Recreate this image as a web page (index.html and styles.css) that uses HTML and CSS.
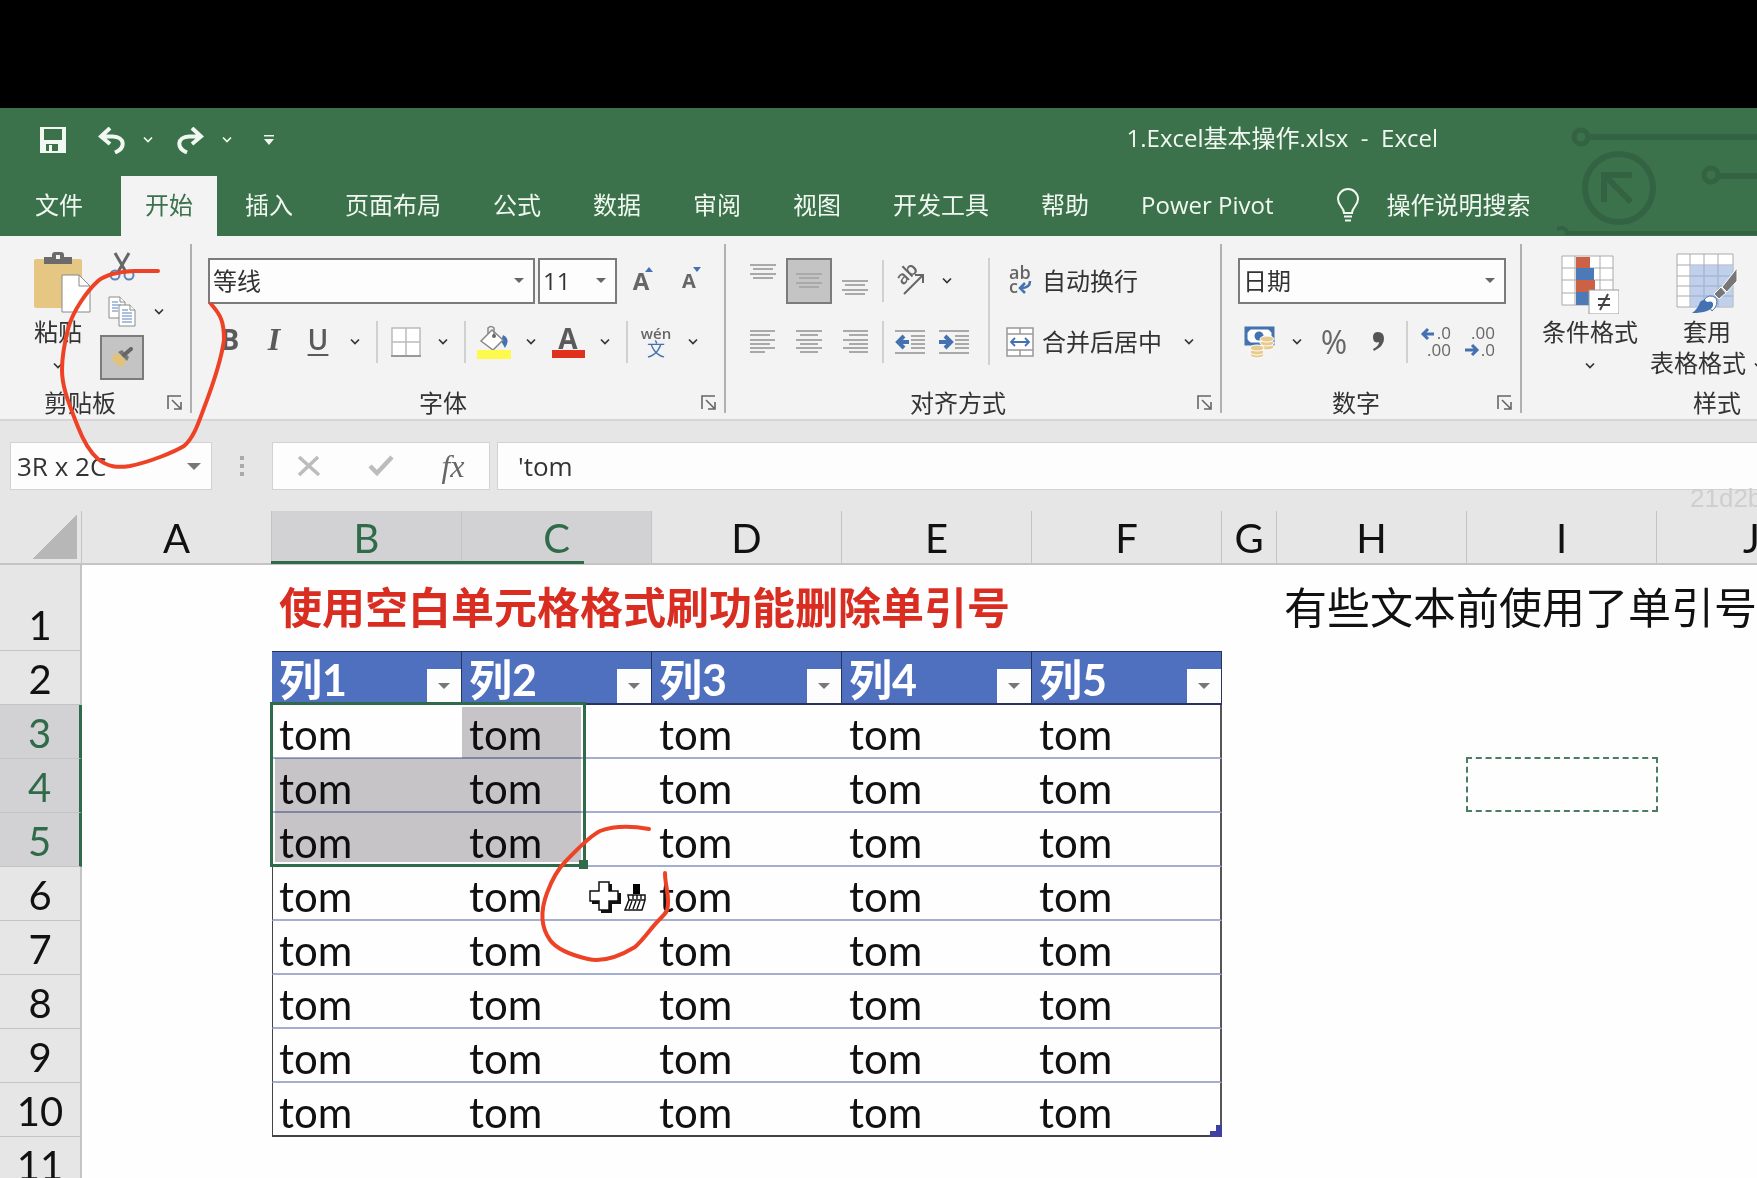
FILE: index.html
```html
<!DOCTYPE html>
<html lang="zh-CN">
  <head>
    <meta charset="UTF-8" />
    <meta name="viewport" content="width=device-width, initial-scale=1.0" />
    <title>1.Excel基本操作.xlsx - Excel</title>
    <link rel="stylesheet" href="styles.css">
  </head>
  <body>
    <!-- 公用图标 -->
    <svg class="defs" aria-hidden="true">
      <symbol id="chev" viewBox="0 0 10 8"><path d="M1 1.5 5 5.5 9 1.5" fill="none" stroke="currentColor" stroke-width="1.7" /></symbol>
      <symbol id="launch" viewBox="0 0 16 16"><path d="M1 14V1H14M5 5 14 14M14 7V14H7" fill="none" stroke="#666" stroke-width="1.6" /></symbol>
    </svg>

    <div class="blank"></div>

    <header class="top">
      <svg class="circuit" width="200" height="128" viewBox="0 0 200 128" fill="none" stroke="#336343" stroke-width="5">
        <circle cx="24" cy="29" r="7" /><path d="M31 29H200" stroke-width="6" />
        <circle cx="62" cy="80" r="34" stroke-width="6" />
        <path d="M47 94V67H75M49 69 74 94" stroke-width="6" />
        <circle cx="154" cy="67" r="7" /><path d="M161 68H200" stroke-width="6" />
        <path d="M-4 128C-4 118 10 118 10 125H200" stroke-width="4" />
      </svg>

      <div class="titlebar">
        <div class="quick">
          <button class="btn save" aria-label="保存">
            <svg width="26" height="26" viewBox="0 0 26 26"><path d="M0 0H26V26H0ZM4 2V13H22V2ZM6 17V24H9V18H12V24H18V17Z" fill="currentColor" fill-rule="evenodd" /></svg>
          </button>
          <div class="pair">
            <button class="btn" aria-label="撤消">
              <svg width="27" height="27" viewBox="0 0 27 27"><path d="M12 1 3 9.500 12 17M4 9.500H15C27 10 28 21 17 25.500" fill="none" stroke="currentColor" stroke-width="4" /></svg>
            </button>
            <button class="chev" aria-label="撤消列表"><svg width="10" height="8"><use href="#chev" /></svg></button>
          </div>
          <div class="pair">
            <button class="btn" aria-label="恢复">
              <svg width="27" height="27" viewBox="0 0 27 27"><path d="M15 1 24 9.500 15 17M23 9.500H12C0 10 -1 21 10 25.500" fill="none" stroke="currentColor" stroke-width="4" /></svg>
            </button>
            <button class="chev" aria-label="恢复列表"><svg width="10" height="8"><use href="#chev" /></svg></button>
          </div>
          <button class="btn" aria-label="自定义">
            <svg width="10" height="10" viewBox="0 0 10 10"><path d="M0 0H10V1.500H0ZM0 4H10L5 10Z" fill="currentColor" /></svg>
          </button>
        </div>
        <div class="title">1.Excel基本操作.xlsx&nbsp; -&nbsp; Excel</div>
      </div>

      <nav class="tabs">
        <a href="#">文件</a>
        <a href="#" class="active">开始</a>
        <a href="#">插入</a>
        <a href="#">页面布局</a>
        <a href="#">公式</a>
        <a href="#">数据</a>
        <a href="#">审阅</a>
        <a href="#">视图</a>
        <a href="#">开发工具</a>
        <a href="#">帮助</a>
        <a href="#">Power Pivot</a>
        <a href="#" class="tell">
          <svg width="24" height="34" viewBox="0 0 24 34" fill="none" stroke="currentColor" stroke-width="2"><path d="M8 25C8 19 2 18 2 11A10 10 0 0 1 22 11C22 18 16 19 16 25ZM8 28.500H16M9 32.500H15" /></svg>
          操作说明搜索
        </a>
      </nav>
    </header>

    <section class="ribbon">
      <div class="group clipboard">
        <div class="body">
          <button class="big paste">
            <svg width="58" height="62" viewBox="0 0 58 62">
              <rect y="7" width="48" height="49" rx="2" fill="#e6c683" />
              <path d="M10 12V5H18V3Q18 0 21 0H27Q30 0 30 3V5H38V12Z" fill="#6b6b6b" /><rect x="22" y="3" width="4" height="4" fill="#f3f3f3" />
              <path d="M28 23H45L56 34V60H28Z" fill="#fff" stroke="#888" /><path d="M45 23V34H56" fill="none" stroke="#888" />
            </svg>
            <span>粘贴</span>
            <span><svg width="10" height="8"><use href="#chev" /></svg></span>
          </button>
          <div class="small">
            <button class="btn" aria-label="剪切">
              <svg width="26" height="30" viewBox="0 0 26 30" fill="none"><path d="M6 1 17 20M20 1 9 20" stroke="#666" stroke-width="3" /><circle cx="6" cy="23" r="4.500" stroke="#5b84b8" stroke-width="2" /><circle cx="20" cy="23" r="4.500" stroke="#5b84b8" stroke-width="2" /></svg>
            </button>
            <div class="pair">
              <button class="btn" aria-label="复制">
                <svg width="28" height="32" viewBox="0 0 28 32"><g fill="#fff" stroke="#8a8a8a"><path d="M1 1H12L17 6V22H1Z" /><path d="M11 9H22L27 14V30H11Z" /><path d="M12 1V6H17M22 9V14H27" /></g><path d="M4 6H10M4 9H13M4 12H10M4 15H10M14 14H20M14 17H24M14 20H24M14 23H24M14 26H24" stroke="#8facd2" stroke-width="1.4" /></svg>
              </button>
              <button class="chev" aria-label="复制选项"><svg width="10" height="8"><use href="#chev" /></svg></button>
            </div>
            <button class="btn on" aria-label="格式刷">
              <svg width="24" height="22" viewBox="0 0 24 22"><path d="M1 10 8 6 17 14 11 20Q6 19 1 10Z" fill="#e2c27b" /><path d="M8 5 12 3 19 10 17 14Z" fill="#777" /><path d="M14 8 21 2" stroke="#666" stroke-width="4" stroke-linecap="round" /></svg>
            </button>
          </div>
        </div>
        <div class="foot"><span>剪贴板</span><button class="launch" aria-label="剪贴板设置"><svg width="16" height="16"><use href="#launch" /></svg></button></div>
      </div>

      <div class="group font">
        <div class="row">
          <label class="combo name"><select aria-label="字体"><option>等线</option></select></label>
          <label class="combo size"><select aria-label="字号"><option>11</option></select></label>
          <button class="btn grow" aria-label="增大字号"><b>A</b><svg width="8" height="5" viewBox="0 0 8 5"><path d="M0 5H8L4 0Z" fill="#4472b0" /></svg></button>
          <button class="btn grow less" aria-label="减小字号"><b>A</b><svg width="8" height="5" viewBox="0 0 8 5"><path d="M0 0H8L4 5Z" fill="#4472b0" /></svg></button>
        </div>
        <div class="row">
          <button class="btn letter"><b>B</b></button>
          <button class="btn letter serif"><i>I</i></button>
          <button class="btn letter"><u>U</u></button>
          <button class="chev" aria-label="下划线"><svg width="10" height="8"><use href="#chev" /></svg></button>
          <i class="sep"></i>
          <button class="btn" aria-label="边框">
            <svg width="30" height="30" viewBox="0 0 30 30"><path d="M1 1H29V29H1ZM15 1V29M1 15H29" fill="#fff" stroke="#bbb" stroke-width="1.5" /><path d="M0 29H30" stroke="#999" stroke-width="2" /></svg>
          </button>
          <button class="chev" aria-label="边框选项"><svg width="10" height="8"><use href="#chev" /></svg></button>
          <i class="sep"></i>
          <button class="btn" aria-label="填充颜色">
            <svg width="34" height="34" viewBox="0 0 34 34"><path d="M26 10Q34 14 28 23L24 16Z" fill="#4472b0" /><path d="M4 16 15 5 26 15 16 25Z" fill="#fff" stroke="#888" stroke-width="1.5" /><path d="M11 9V3Q14 0 17 3V11" fill="none" stroke="#888" stroke-width="1.500" /><circle cx="17" cy="11" r="2" fill="#666" /><rect y="25" width="34" height="9" rx="1" fill="#fdf94d" /></svg>
          </button>
          <button class="chev" aria-label="填充选项"><svg width="10" height="8"><use href="#chev" /></svg></button>
          <button class="btn color"><b>A</b></button>
          <button class="chev" aria-label="颜色选项"><svg width="10" height="8"><use href="#chev" /></svg></button>
          <i class="sep"></i>
          <button class="btn wen"><span>wén</span><span>文</span></button>
          <button class="chev" aria-label="拼音选项"><svg width="10" height="8"><use href="#chev" /></svg></button>
        </div>
        <div class="foot"><span>字体</span><button class="launch" aria-label="字体设置"><svg width="16" height="16"><use href="#launch" /></svg></button></div>
      </div>

      <div class="group align">
        <div class="body">
          <div class="rows">
            <div class="row">
              <button class="btn wide" aria-label="顶端对齐"><svg class="up" width="28" height="16" viewBox="0 0 28 16"><path d="M1 1H27M4 5H24M1 10H27M4 14H24" /></svg></button>
              <button class="btn wide on" aria-label="垂直居中"><svg width="28" height="16" viewBox="0 0 28 16"><path d="M1 1H27M4 5H24M1 10H27M4 14H24" /></svg></button>
              <button class="btn wide" aria-label="底端对齐"><svg class="down" width="28" height="16" viewBox="0 0 28 16"><path d="M1 1H27M4 5H24M1 10H27M4 14H24" /></svg></button>
              <i class="sep"></i>
              <button class="btn" aria-label="方向">
                <svg width="30" height="30" viewBox="0 0 30 30"><text x="0" y="0" transform="translate(8 20) rotate(-45)" font-size="19" font-weight="600" fill="#666">ab</text><path d="M9 28 28 9M20 9H28V17" fill="none" stroke="#666" stroke-width="2" /></svg>
              </button>
              <button class="chev" aria-label="方向选项"><svg width="10" height="8"><use href="#chev" /></svg></button>
            </div>
            <div class="row">
              <button class="btn wide" aria-label="左对齐"><svg width="26" height="24" viewBox="0 0 26 24"><path d="M0 1H25M0 5H20M0 10H25M0 14H20M0 18H25M0 22H15" /></svg></button>
              <button class="btn wide" aria-label="居中"><svg width="26" height="24" viewBox="0 0 26 24"><path d="M0 1H26M4 5H22M0 10H26M4 14H22M0 18H26M4 22H22" /></svg></button>
              <button class="btn wide" aria-label="右对齐"><svg width="26" height="24" viewBox="0 0 26 24"><path d="M1 1H26M7 5H26M1 10H26M7 14H26M1 18H26M7 22H26" /></svg></button>
              <i class="sep"></i>
              <button class="btn" aria-label="减少缩进"><svg width="30" height="24" viewBox="0 0 30 24"><path d="M0 1H30M16 6H30M16 10H30M16 14H30M16 18H30M0 23H30" /><path class="arrow" d="M14 12H4M9 6 3 12 9 18" /></svg></button>
              <button class="btn" aria-label="增加缩进"><svg width="30" height="24" viewBox="0 0 30 24"><path d="M0 1H30M16 6H30M16 10H30M16 14H30M16 18H30M0 23H30" /><path class="arrow" d="M0 12H10M6 6 12 12 6 18" /></svg></button>
            </div>
          </div>
          <i class="sep tall"></i>
          <div class="rows">
            <button class="row text">
              <span class="btn"><svg width="24" height="28" viewBox="0 0 24 28"><text x="1" y="12" font-size="18" font-weight="600" fill="#666">ab</text><text x="1" y="26" font-size="18" font-weight="600" fill="#666">c</text><path d="M22 14Q22 21 13 21M17 16 12 21 17 26" fill="none" stroke="#4472b0" stroke-width="2.500" /></svg></span>
              自动换行
            </button>
            <div class="row">
              <button class="row text">
                <span class="btn"><svg width="28" height="30" viewBox="0 0 28 30"><path d="M1 1H27V29H1ZM1 7H27M1 23H27M14 1V7M14 23V29" fill="#fff" stroke="#999" stroke-width="1.500" /><path d="M5 15H23M9 11 5 15 9 19M19 11 23 15 19 19" fill="none" stroke="#4472b0" stroke-width="1.800" /></svg></span>
                合并后居中
              </button>
              <button class="chev merge" aria-label="合并选项"><svg width="10" height="8"><use href="#chev" /></svg></button>
            </div>
          </div>
        </div>
        <div class="foot"><span>对齐方式</span><button class="launch" aria-label="对齐设置"><svg width="16" height="16"><use href="#launch" /></svg></button></div>
      </div>

      <div class="group number">
        <div class="row">
          <label class="combo format"><select aria-label="数字格式"><option>日期</option></select></label>
        </div>
        <div class="row">
          <button class="btn" aria-label="会计数字格式">
            <svg width="30" height="32" viewBox="0 0 30 32"><rect x="1" y="2" width="27" height="16" fill="#fff" stroke="#4472b0" stroke-width="3" /><path d="M1 2H7L1 8ZM28 2H22L28 8ZM1 18V12L7 18Z" fill="#4472b0" /><circle cx="14" cy="10" r="4.500" fill="#4472b0" /><g fill="#e8c98e" stroke="#fff"><ellipse cx="22" cy="21" rx="7" ry="3" /><ellipse cx="22" cy="17" rx="7" ry="3" /><ellipse cx="22" cy="13" rx="7" ry="3" /><ellipse cx="12" cy="29" rx="7" ry="3" /><ellipse cx="12" cy="26" rx="7" ry="3" /><ellipse cx="12" cy="22" rx="7" ry="3" /></g></svg>
          </button>
          <button class="chev" aria-label="货币选项"><svg width="10" height="8"><use href="#chev" /></svg></button>
          <button class="btn percent">%</button>
          <button class="btn" aria-label="千位分隔样式"><svg width="13" height="20" viewBox="0 0 13 20"><path d="M6 0Q12 0 12 7T2 19L1 17Q7 14 7 10Q1 12 1 5Q1 0 6 0Z" fill="#555" /></svg></button>
          <i class="sep"></i>
          <button class="btn" aria-label="增加小数位数"><svg width="30" height="32" viewBox="0 0 30 32" font-size="17" fill="#666"><text x="30" y="13" text-anchor="end">.0</text><text x="30" y="30" text-anchor="end">.00</text><path class="arrow thin" d="M13 8H3M7 3 2 8 7 13" /></svg></button>
          <button class="btn" aria-label="减少小数位数"><svg width="30" height="32" viewBox="0 0 30 32" font-size="17" fill="#666"><text x="30" y="13" text-anchor="end">.00</text><text x="30" y="30" text-anchor="end">.0</text><path class="arrow thin" d="M0 24H11M7 19 12 24 7 29" /></svg></button>
        </div>
        <div class="foot"><span>数字</span><button class="launch" aria-label="数字设置"><svg width="16" height="16"><use href="#launch" /></svg></button></div>
      </div>

      <div class="group styles">
        <div class="body">
          <button class="big">
            <svg width="58" height="62" viewBox="0 0 58 62">
              <path d="M1 4H52V53H1ZM1 16H52M1 28H52M1 41H52M14 4V53M39 4V53" fill="#fff" stroke="#aaa" />
              <path d="M15 5H29V16H15ZM15 28H34V40H15Z" fill="#cb6145" /><path d="M15 16H33V28H15ZM15 40H28V53H15Z" fill="#4c7ab8" />
              <rect x="28" y="38" width="30" height="24" fill="#fff" stroke="#999" /><path d="M37 47H49M37 53H49M47 42 39 58" stroke="#444" stroke-width="2" />
            </svg>
            <span>条件格式</span>
            <span><svg width="10" height="8"><use href="#chev" /></svg></span>
          </button>
          <button class="big second">
            <svg width="62" height="62" viewBox="0 0 62 62">
              <path d="M1 2H57V55H1ZM1 13H57M1 24H57M1 34H57M1 44H57M14 2V55M28 2V55M42 2V55" fill="#fff" stroke="#aaa" />
              <path d="M14 13H57V55H14Z" fill="#b5c7e6" opacity=".85" /><path d="M14 24H57M14 34H57M14 44H57M28 13V55M42 13V55" stroke="#9fb3d6" />
              <path d="M61 16V29L51 40 46 35Z" fill="#777" stroke="#fff" /><path d="M45 35 50 41 43 47 38 42Z" fill="#777" stroke="#fff" />
              <path d="M28 48Q33 41 40 46 43 53 36 59Z" fill="#fff" stroke="#4472b0" /><path d="M16 61Q22 57 24 50 28 46 31 50 38 48 37 54 34 61 16 61Z" fill="#4472b0" />
            </svg>
            <span>套用</span>
            <span>表格格式<svg class="after" width="10" height="8"><use href="#chev" /></svg></span>
          </button>
        </div>
        <div class="foot"><span>样式</span></div>
      </div>
    </section>

    <section class="formula">
      <div class="namebox"><input aria-label="名称框" value="3R x 2C" /><button aria-label="名称列表"></button></div>
      <svg class="dots" width="4" height="20" viewBox="0 0 4 20" fill="#aaa"><path d="M0 0H4V4H0ZM0 8H4V12H0ZM0 16H4V20H0Z" /></svg>
      <div class="fx">
        <button aria-label="取消"><svg width="24" height="22" viewBox="0 0 24 22"><path d="M2 2 22 20M21 2 2 20" fill="none" stroke="#bcbcbc" stroke-width="3.500" /></svg></button>
        <button aria-label="输入"><svg width="26" height="22" viewBox="0 0 26 22"><path d="M2 11 9 18 24 2" fill="none" stroke="#bcbcbc" stroke-width="4.500" /></svg></button>
        <button class="fn"><i>fx</i></button>
      </div>
      <input class="entry" aria-label="编辑栏" value="'tom" />
      <span class="mark">21d2b1</span>
    </section>

    <main class="sheet">
      <table>
        <colgroup>
          <col class="head" /><col /><col /><col /><col /><col /><col /><col class="slim" /><col /><col /><col />
        </colgroup>
        <thead>
          <tr>
            <th class="corner"></th>
            <th>A</th><th class="sel">B</th><th class="sel">C</th><th>D</th><th>E</th>
            <th>F</th><th>G</th><th>H</th><th>I</th><th>J</th>
          </tr>
        </thead>
        <tbody id="rows">
          <tr class="first">
            <th>1</th>
            <td></td>
            <td colspan="5" class="red">使用空白单元格格式刷功能删除单引号</td>
            <td></td>
            <td colspan="3" class="note">有些文本前使用了单引号</td>
          </tr>
          <tr>
            <th>2</th>
            <td></td>
            <td class="field"><div>列1<button aria-label="筛选"></button></div></td>
            <td class="field"><div>列2<button aria-label="筛选"></button></div></td>
            <td class="field"><div>列3<button aria-label="筛选"></button></div></td>
            <td class="field"><div>列4<button aria-label="筛选"></button></div></td>
            <td class="field"><div>列5<button aria-label="筛选"></button></div></td>
            <td colspan="4"></td>
          </tr>
        </tbody>
      </table>

      <div class="selection"></div>
      <div class="header-line"></div>
      <div class="copied"></div>
      <svg class="table-corner" width="12" height="12" viewBox="0 0 12 12"><path d="M6 0H12V12H0V6H6Z" fill="#3f3f9f" /></svg>
      <svg class="cursor" width="60" height="34" viewBox="0 0 60 34">
        <path d="M13 4H24V13H33V24H24V33H13V24H4V13H13Z" fill="#111" />
        <path d="M11 2H21V11H30V21H21V30H11V21H2V11H11Z" fill="#fff" stroke="#111" stroke-width="1.500" />
        <path d="M45 4H52V14H45Z" fill="#000" />
        <path d="M40 15H57V20L54 30H37L41 20Z" fill="#fff" stroke="#111" stroke-width="1.500" />
        <path d="M41 20H57M44 21 41 29M48 21 45 29M52 21 49 29M45 15V19M49 15V19M53 15V19" stroke="#111" stroke-width="1.400" />
      </svg>
    </main>

    <!-- 手绘红圈标注 -->
    <svg class="ink" width="700" height="980" viewBox="0 0 700 980">
      <path d="M158 271H134C116 272 105 275 98 281C88 290 73 310 68 329C64 345 62 360 62 370C62 384 66 397 78 427C85 445 91 453 98 459C108 467 117 468 130 466C150 462 174 452 184 446C194 438 199 421 204 408C212 387 221 362 224 340C224 322 221 315 211 304" />
      <path d="M649 829C632 826 616 825 600 831C588 837 576 851 565 862C557 870 550 885 547 893C541 909 540 926 550 940C558 951 575 956 588 959C602 962 617 958 635 947C645 938 650 929 659 920C667 912 668 911 668 901C668 890 665 884 665 873" />
    </svg>

    <script>
      const rows = document.getElementById("rows");

      for (let n = 3; n <= 11; n++) {
        const tr = document.createElement("tr");
        const selected = n <= 5 ? ' class="sel"' : "";
        if (n === 11) {
          tr.innerHTML = `<th>${n}</th><td colspan="10"></td>`;
        } else {
          tr.className = n === 10 ? "data last" : "data";
          tr.innerHTML = `<th${selected}>${n}</th><td></td>${'<td class="cell">tom</td>'.repeat(5)}<td colspan="4"></td>`;
        }
        rows.appendChild(tr);
      }
    </script>
  </body>
</html>
```
FILE: styles.css
```css
* {
  box-sizing: border-box;
}
body {
  margin: 0;
  height: 100vh;
  overflow: hidden;
  display: flex;
  flex-direction: column;
  position: relative;
  background: #fefefe;
  color: #333;
  font: 24px/26px "Open Sans", "Noto Sans CJK SC", sans-serif;
}
button,
input,
select {
  margin: 0;
  padding: 0;
  border: 0;
  background: none;
  color: inherit;
  font: inherit;
}
svg {
  flex: none;
}
.defs {
  position: absolute;
  width: 0;
  height: 0;
}
.blank {
  height: 108px;
  flex: none;
  background: #000;
}

/* 标题栏和选项卡 */
.top {
  position: relative;
  flex: none;
  background: #3b724b;
  color: #f1f8f1;
}
.circuit {
  position: absolute;
  right: 0;
  top: 0;
}
.titlebar {
  position: relative;
  display: flex;
  justify-content: space-between;
  align-items: center;
  height: 68px;
  padding: 0 319px 4px 31px;
}
.quick {
  display: flex;
  gap: 5px;
}
.save {
  margin-right: 9px;
}
.pair {
  display: flex;
}
.title {
  padding-bottom: 4px;
  white-space: nowrap;
}
.tabs {
  position: relative;
  display: flex;
  height: 60px;
  padding-left: 9px;
}
.tabs a {
  display: flex;
  align-items: center;
  padding: 0 26px 2px;
  color: inherit;
  text-decoration: none;
  white-space: nowrap;
}
.tabs .active {
  margin: 0 2px 0 12px;
  padding: 0 24px 2px;
  background: #f3f3f3;
  color: #3b724b;
}
.tabs .tell {
  gap: 26px;
  padding-left: 37px;
}

/* 功能区 */
.ribbon {
  display: flex;
  flex: none;
  padding-top: 8px;
  background: #f3f3f3;
  border-bottom: 2px solid #d6d6d6;
}
.group {
  position: relative;
  display: flex;
  flex-direction: column;
  flex: none;
  gap: 15px;
  padding: 14px 2px 3px 0;
}
.group::after {
  content: "";
  position: absolute;
  top: 0;
  right: 0;
  bottom: 6px;
  width: 2px;
  background: #b0b0b0;
}
.body,
.row {
  display: flex;
}
.row {
  height: 46px;
  align-items: center;
}
.rows {
  display: flex;
  flex-direction: column;
  gap: 15px;
}
.btn {
  display: flex;
  align-items: center;
  justify-content: center;
  width: 44px;
  height: 46px;
}
.btn.wide {
  width: 46px;
}
.btn.on {
  background: #c5c4c5;
  border: 2px solid #7b7b7b;
}
.chev {
  display: flex;
  align-items: center;
  justify-content: center;
  width: 30px;
  height: 46px;
}
.sep {
  width: 2px;
  height: 42px;
  margin: 0 6px;
  background: #d0d0d0;
}
.foot {
  display: flex;
  align-items: center;
  height: 26px;
  margin-top: auto;
}
.foot span {
  flex: 1;
  text-align: center;
}
.launch {
  display: flex;
  justify-content: center;
  width: 30px;
}
.big {
  display: flex;
  flex-direction: column;
  align-items: center;
  width: 96px;
  line-height: 31px;
  white-space: nowrap;
}
.big > svg {
  margin-bottom: 2px;
}
.big span {
  height: 31px;
}
.big span svg {
  vertical-align: middle;
}
.big .after {
  margin-left: 8px;
}

.clipboard {
  width: 192px;
  padding-top: 0;
  gap: 10px;
}
.paste {
  align-items: flex-start;
  width: 58px;
  margin: 8px 8px 0 34px;
}
.paste span {
  width: 48px;
}
.small .btn {
  height: 45px;
}
.small .pair {
  align-items: center;
}

.font {
  width: 534px;
}
.font .row {
  padding-left: 16px;
}
.combo {
  position: relative;
  height: 46px;
  border: 2px solid #7b7b7b;
  background: #fdfdfd;
}
.combo::after {
  content: "";
  position: absolute;
  right: 9px;
  top: 18px;
  border: 5px solid transparent;
  border-top-color: #666;
  pointer-events: none;
}
.combo select {
  width: 100%;
  height: 100%;
  padding-left: 3px;
  appearance: none;
}
.name {
  width: 327px;
  margin-right: 3px;
}
.size {
  width: 79px;
}
.grow {
  position: relative;
  width: 48px;
  color: #666;
}
.grow svg {
  position: absolute;
  top: 9px;
  left: 28px;
}
.less {
  font-size: 20px;
}
.letter {
  padding-bottom: 6px;
  font-size: 28px;
  color: #5a5a5a;
}
.letter u {
  font-weight: 600;
  text-decoration-thickness: 2px;
  text-underline-offset: 4px;
}
.serif {
  font-family: "Liberation Serif", serif;
  font-weight: bold;
  font-size: 32px;
}
.color {
  font-size: 28px;
  color: #5a5a5a;
}
.color b {
  width: 33px;
  line-height: 24px;
  border-bottom: 8px solid #e0301e;
}
.wen {
  flex-direction: column;
  font-size: 15px;
  font-weight: 600;
  line-height: 14px;
  color: #666;
}
.wen span + span {
  font-size: 18px;
  font-weight: 400;
  line-height: 18px;
  color: #4472b0;
}

.align {
  width: 496px;
}
.align .body {
  padding-left: 14px;
}
.align .rows:first-child .sep {
  margin: 0 4px;
}
.align .btn svg,
.number .btn svg {
  overflow: visible;
}
.align .btn svg > path:not([stroke]) {
  fill: none;
  stroke: #a9a9a9;
  stroke-width: 2;
}
.align .btn svg > .arrow:not([stroke]),
.number .arrow {
  fill: none;
  stroke: #4472b0;
  stroke-width: 4;
}
.number .thin {
  stroke-width: 3;
}
.up {
  margin-bottom: 18px;
}
.down {
  margin-top: 14px;
}
.tall {
  height: 107px;
  margin: 0 8px 0 12px;
}
.text {
  white-space: nowrap;
}
.merge {
  margin-left: 12px;
}

.number {
  width: 300px;
}
.number .row {
  padding-left: 16px;
}
.format {
  width: 268px;
}
.percent {
  font-size: 32px;
  color: #666;
}

.styles {
  width: 392px;
  padding-top: 8px;
  gap: 10px;
}
.styles .body {
  padding-left: 20px;
}
.second {
  width: 120px;
  margin-left: 9px;
}

/* 编辑栏 */
.formula {
  position: relative;
  display: flex;
  align-items: center;
  flex: none;
  height: 90px;
  padding: 0 0 0 10px;
  background: #e6e6e7;
}
.namebox,
.fx,
.entry {
  height: 48px;
  background: #fdfdfd;
  border: 1px solid #d2d2d2;
}
.namebox {
  display: flex;
  align-items: center;
  width: 202px;
  padding: 0 10px 0 6px;
  font-size: 26px;
}
.namebox input {
  flex: 1;
  min-width: 0;
}
.namebox button {
  border: 7px solid transparent;
  border-top-color: #777;
  border-bottom-width: 0;
}
.dots {
  margin: 0 28px;
}
.fx {
  display: flex;
  width: 218px;
  margin-right: 7px;
}
.fx button {
  display: flex;
  align-items: center;
  justify-content: center;
  width: 72px;
}
.fn {
  font-family: "Liberation Serif", serif;
  font-size: 32px;
  color: #666;
}
.entry {
  flex: 1;
  min-width: 0;
  padding-left: 20px;
  border-right: 0;
  font-size: 26px;
}
.mark {
  position: absolute;
  left: 1690px;
  bottom: -5px;
  z-index: 1;
  font: 26px/36px "Liberation Sans Narrow", "Liberation Sans", sans-serif;
  color: #cfcfcf;
}

/* 工作表 */
.sheet {
  position: relative;
  flex: 1;
  overflow: hidden;
  color: #111;
  font-family: Lato, "Noto Sans CJK SC", sans-serif;
  font-size: 42px;
  line-height: 46px;
}
table {
  width: 1847px;
  table-layout: fixed;
  border-spacing: 0;
}
col {
  width: 190px;
}
.head {
  width: 82px;
}
.slim {
  width: 55px;
}
tr {
  height: 54px;
}
th,
td {
  height: 54px;
  padding: 0;
  vertical-align: bottom;
  text-align: left;
  white-space: nowrap;
}
th {
  background: #e6e6e7;
  border-right: 2px solid #c4c4c5;
  border-bottom: 1px solid #c4c4c5;
  font-size: 40px;
  font-weight: 400;
  line-height: 50px;
  text-align: center;
}
thead th {
  height: 53px;
  border-right-width: 1px;
  border-bottom: 2px solid #c4c4c5;
}
th.sel {
  background: #d2d1d3;
  color: #2f6b4a;
}
tbody th.sel {
  border-right: 3px solid #2f6b4a;
}
.corner {
  background: linear-gradient(to bottom right, transparent 50%, #b7b7b8 50%) 33px 4px / 44px 44px no-repeat #e6e6e7;
}
.first,
.first > * {
  height: 86px;
}
.first td {
  padding-left: 7px;
  vertical-align: middle;
  font-size: 43px;
}
.first .red {
  color: #d92d22;
  font-weight: 700;
}
.field {
  background: #4f6fbf;
  border: 1px solid #26345e;
  border-left-width: 0;
  border-bottom-width: 2px;
  color: #fff;
  font-size: 43px;
  font-weight: 700;
}
.field div {
  display: flex;
  justify-content: space-between;
  align-items: flex-end;
  padding-left: 7px;
}
.field button {
  width: 34px;
  height: 34px;
  padding: 13px 11px;
  background: #fdfdfd;
}
.field button::before {
  content: "";
  display: block;
  border: 6px solid transparent;
  border-top-color: #777;
  border-bottom-width: 0;
}
.cell {
  padding-left: 7px;
  border-bottom: 2px solid #a3aed0;
}
.cell:nth-child(3) {
  border-left: 1px solid #444;
  padding-left: 6px;
}
.cell:nth-child(7) {
  border-right: 2px solid #555;
}
.last .cell {
  border-bottom: 2px solid #444;
}

/* 选区、复制虚线框和光标 */
.selection {
  position: absolute;
  left: 270px;
  top: 191px;
  width: 316px;
  height: 165px;
  border: 3px solid #2f6b4a;
}
.selection::before {
  content: "";
  position: absolute;
  inset: 2px;
  background: #c7c5c8;
  clip-path: polygon(187px 0, 100% 0, 100% 100%, 0 100%, 0 51px, 187px 51px);
  mix-blend-mode: multiply;
}
.selection::after {
  content: "";
  position: absolute;
  right: -5px;
  bottom: -5px;
  width: 9px;
  height: 9px;
  background: #2f6b4a;
}
.header-line {
  position: absolute;
  left: 271px;
  top: 50px;
  width: 313px;
  height: 3px;
  background: #2f6b4a;
}
.copied {
  position: absolute;
  left: 1466px;
  top: 246px;
  width: 192px;
  height: 55px;
  border: 2px dashed #4b7d63;
}
.table-corner {
  position: absolute;
  left: 1210px;
  top: 614px;
}
.cursor {
  position: absolute;
  left: 588px;
  top: 369px;
}
.ink {
  position: absolute;
  left: 0;
  top: 0;
  fill: none;
  stroke: #ed4226;
  stroke-width: 4;
  stroke-linecap: round;
  pointer-events: none;
}
```
